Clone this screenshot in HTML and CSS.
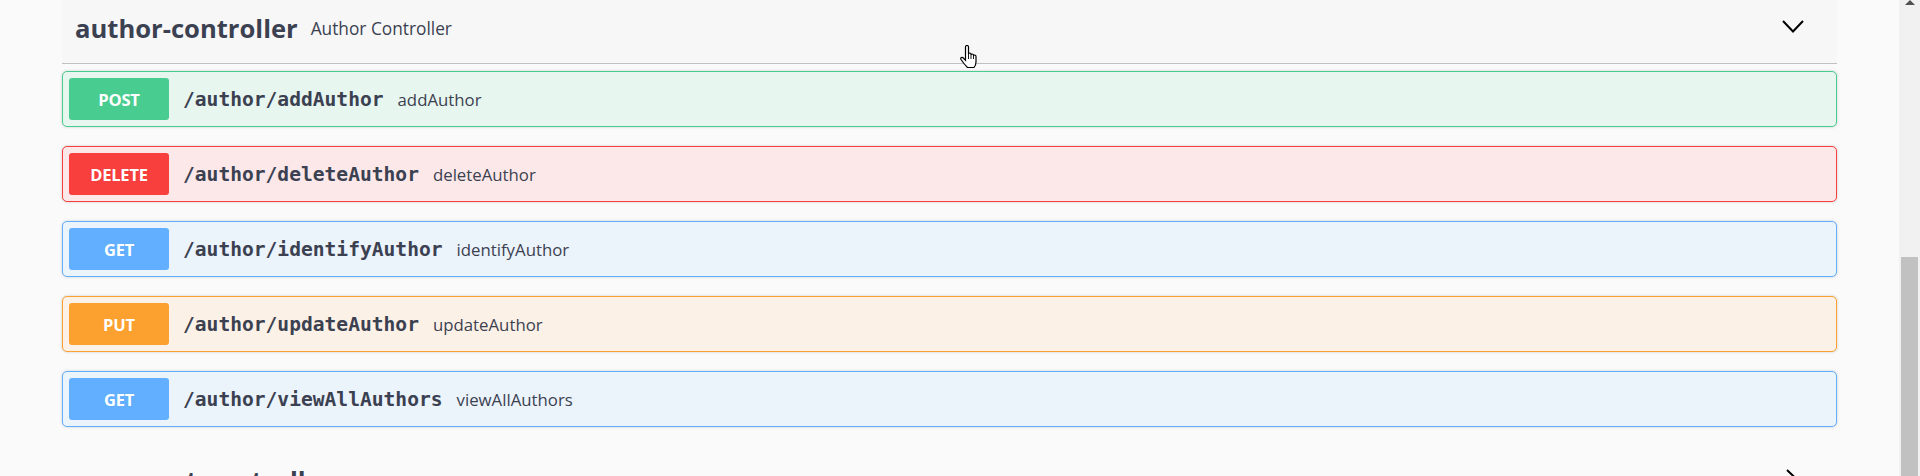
FILE: index.html
```html
<!DOCTYPE html>
<html lang="en">
<head>
<meta charset="utf-8">
<title>Swagger UI - author-controller</title>
<link rel="stylesheet" href="styles.css">
</head>
<body>
<div class="page">
  <main class="content">
    <section class="tag-section">
      <h3 class="tag-header is-hover">
        <span class="tag-name">author-controller</span>
        <small class="tag-desc">Author Controller</small>
        <svg class="tag-arrow" width="22" height="13" viewBox="0 0 22 13"><polyline points="1,1 11,11.5 21,1" fill="none" stroke="#000" stroke-width="2"/></svg>
      </h3>
      <div class="ops">
        <div class="op op-post"><span class="method">POST</span><span class="path">/author/addAuthor</span><span class="desc">addAuthor</span></div>
        <div class="op op-delete"><span class="method">DELETE</span><span class="path">/author/deleteAuthor</span><span class="desc">deleteAuthor</span></div>
        <div class="op op-get"><span class="method">GET</span><span class="path">/author/identifyAuthor</span><span class="desc">identifyAuthor</span></div>
        <div class="op op-put"><span class="method">PUT</span><span class="path">/author/updateAuthor</span><span class="desc">updateAuthor</span></div>
        <div class="op op-get"><span class="method">GET</span><span class="path">/author/viewAllAuthors</span><span class="desc">viewAllAuthors</span></div>
      </div>
    </section>
    <section class="tag-section next">
      <h3 class="tag-header">
        <span class="tag-name">comment-controller</span>
        <span class="tag-spacer"></span>
        <svg class="tag-arrow-right" width="13" height="22" viewBox="0 0 13 22"><polyline points="1,1 11.5,11 1,21" fill="none" stroke="#000" stroke-width="2"/></svg>
      </h3>
    </section>
  </main>
  <div class="scrollbar">
    <div class="sb-arrow"></div>
    <div class="sb-thumb"></div>
  </div>
</div>
<svg class="cursor-hand" width="20" height="24" viewBox="0 0 20 24"><path d="M6.5 2 Q6.5 0.5 8 0.5 Q9.5 0.5 9.5 2 V9 Q9.5 8 10.7 8 Q12 8 12 9.3 V10 Q12 9 13.2 9 Q14.5 9 14.5 10.3 V11 Q14.5 10 15.7 10 Q17 10 17 11.5 V17 Q17 20 15 22.5 H8.5 Q7 21 5 18.5 L2 14.5 Q1.3 13.3 2.3 12.6 Q3.3 12 4.3 13 L6.5 15.3 Z" fill="#fff" stroke="#000" stroke-width="1.2"/><path d="M12 10 V14 M14.5 11 V14 M9.5 9 V14" stroke="#000" stroke-width="0.9" fill="none"/></svg>
</body>
</html>
```
FILE: styles.css
```css
html, body {
  margin: 0;
  padding: 0;
  height: 476px;
  overflow: hidden;
}
body {
  background: #fafafa;
  color: #3b4151;
  font-family: "Open Sans", "Noto Sans", sans-serif;
}
.page {
  display: flex;
  height: 476px;
}
.content {
  flex: 1;
  padding: 0 62px;
  min-width: 0;
}
.tag-header {
  display: flex;
  align-items: flex-start;
  box-sizing: border-box;
  height: 64px;
  margin: 0 0 7px;
  padding: 16px 0 0 13px;
  border-bottom: 1px solid rgba(59, 65, 81, .3);
  font-weight: 700;
}
.tag-header.is-hover {
  background: #f7f7f7;
}
.tag-name {
  font-size: 25.6px;
  line-height: 1;
}
.tag-desc {
  flex: 1;
  margin-top: 4px;
  padding: 0 0 0 13px;
  font-size: 17.3px;
  font-weight: 400;
  line-height: 1;
}
.tag-spacer {
  flex: 1;
}
.tag-arrow {
  margin: 4px 33px 0 0;
}
.tag-arrow-right {
  margin: 1px 38px 0 0;
}
.ops {
  display: flex;
  flex-direction: column;
  gap: 19px;
}
.op {
  display: flex;
  align-items: center;
  height: 54px;
  padding: 0 6px;
  border: 1px solid;
  border-radius: 5px;
  box-shadow: 0 0 3px rgba(0, 0, 0, .19);
}
.method {
  width: 100px;
  height: 42px;
  flex: none;
  display: flex;
  align-items: center;
  justify-content: center;
  border-radius: 3px;
  color: #fff;
  font-size: 16.5px;
  font-weight: 700;
  letter-spacing: -0.2px;
}
.path {
  padding: 0 14px 0 14px;
  font-family: "DejaVu Sans Mono", "Liberation Mono", monospace;
  font-weight: 700;
  font-size: 19.6px;
  color: #3b4151;
}
.desc {
  font-size: 16.8px;
  color: #3b4151;
}
.op-post { background: #e8f6f0; border-color: #49cc90; }
.op-post .method { background: #49cc90; }
.op-delete { background: #fce8e8; border-color: #f93e3e; }
.op-delete .method { background: #f93e3e; }
.op-get { background: #ebf3fb; border-color: #61affe; }
.op-get .method { background: #61affe; }
.op-put { background: #fcf1e6; border-color: #fca130; }
.op-put .method { background: #fca130; }
.tag-section.next {
  margin-top: 25px;
}
.tag-section.next .tag-header {
  border-bottom-color: transparent;
}
.scrollbar {
  width: 21px;
  flex: none;
  background: #f1f1f1;
  display: flex;
  flex-direction: column;
  align-items: center;
}
.sb-arrow {
  width: 0;
  height: 0;
  border-left: 5px solid transparent;
  border-right: 5px solid transparent;
  border-bottom: 5px solid #505050;
}
.sb-thumb {
  width: 17px;
  margin-top: 252px;
  flex: 1;
  background: #c1c1c1;
}
.cursor-hand {
  position: absolute;
  left: 959px;
  top: 45px;
}
```
